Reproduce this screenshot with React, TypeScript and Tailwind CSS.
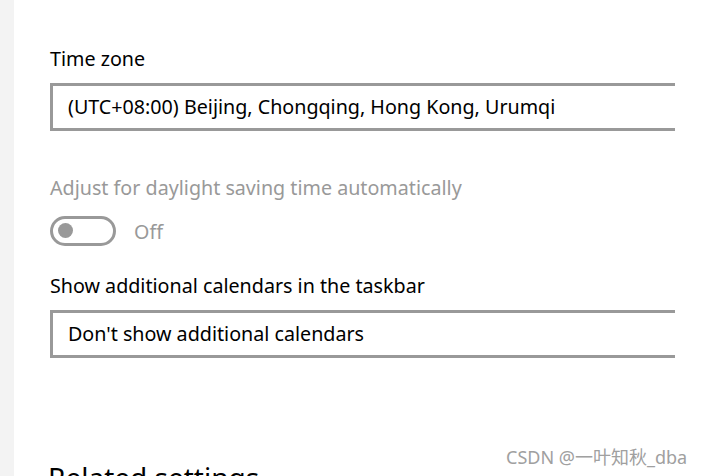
const font = { fontFamily: '"Noto Sans", "Open Sans", sans-serif' };

const Dropdown = ({ value }: { value: string }) => {
  return (
    <div className="w-[625px] overflow-hidden">
      <div className="w-[660px] h-[48px] border-[3px] border-[#999999] bg-white flex items-center pl-[15px] text-[19.7px] text-black">
        {value}
      </div>
    </div>
  );
};

const Toggle = () => {
  return (
    <div className="flex items-center gap-[18px] mt-[13px]">
      <div className="w-[66px] h-[30px] rounded-full border-[3px] border-[#999999] flex items-center pl-[5px]">
        <div className="w-[15px] h-[15px] rounded-full bg-[#999999]" />
      </div>
      <span className="text-[19.7px] text-[#999999] pt-[2px]">Off</span>
    </div>
  );
};

export default function App() {
  return (
    <div
      className="relative flex w-[704px] h-[476px] overflow-hidden bg-white"
      style={font}
    >
      {/* left nav strip */}
      <div className="w-[14px] h-full bg-[#f3f3f3]" />

      <div className="flex flex-col pl-[36px]">
        <div className="w-[135px] h-[2px] bg-[#cccccc]" />

        <div className="mt-[45px] text-[19.7px] leading-[28px] text-black">
          Time zone
        </div>
        <div className="mt-[10px]">
          <Dropdown value="(UTC+08:00) Beijing, Chongqing, Hong Kong, Urumqi" />
        </div>

        <div className="mt-[43px] text-[19.7px] leading-[28px] text-[#999999]">
          Adjust for daylight saving time automatically
        </div>
        <Toggle />

        <div className="mt-[25px] text-[19.7px] leading-[28px] text-black">
          Show additional calendars in the taskbar
        </div>
        <div className="mt-[10px]">
          <Dropdown value="Don't show additional calendars" />
        </div>

        <div className="mt-[101px] -ml-[2px] text-[28px] leading-[36px] text-black whitespace-nowrap">
          Related settings
        </div>
      </div>

      {/* watermark */}
      <div
        className="absolute left-[506px] top-[445px] text-[18px] leading-[24px] text-[#a0a0a0] whitespace-nowrap"
        style={{ fontFamily: '"Noto Sans", "Noto Sans CJK SC", sans-serif' }}
      >
        CSDN @一叶知秋_dba
      </div>
    </div>
  );
}
